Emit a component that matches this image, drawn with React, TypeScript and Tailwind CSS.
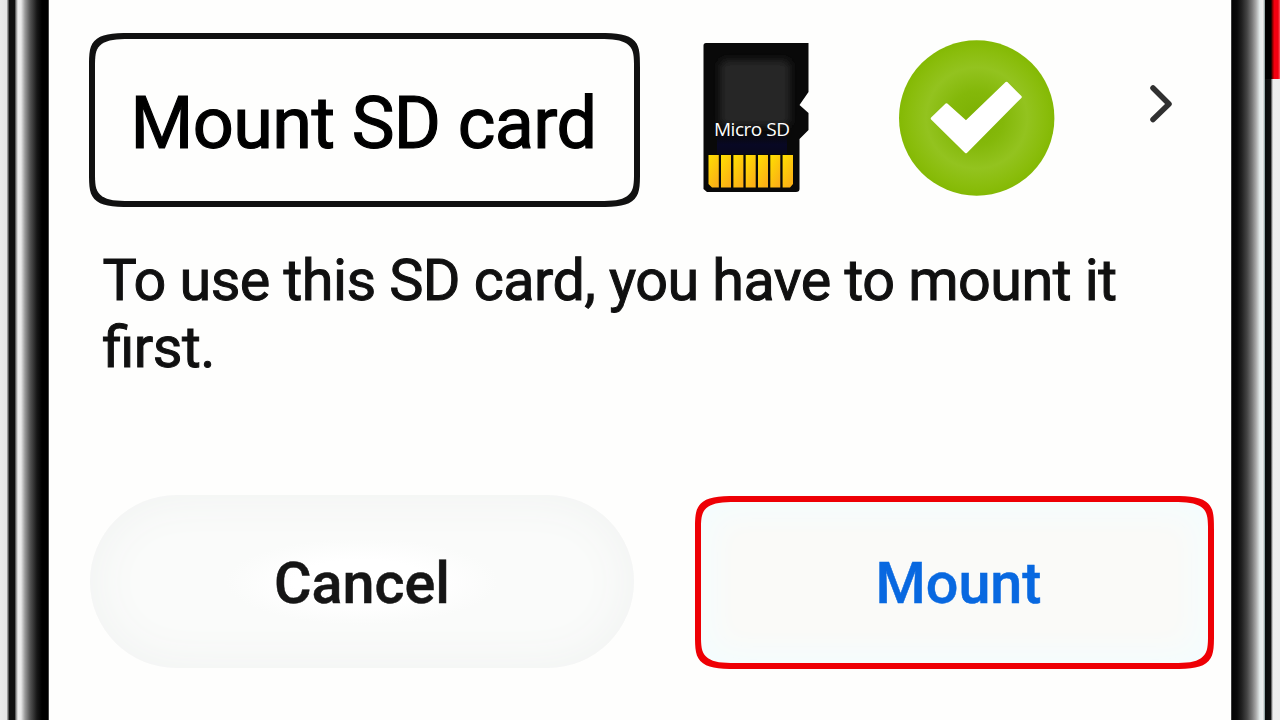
import React from "react";

const SdCard = () => {
  return (
    <svg width="106" height="149" viewBox="0 0 106 149">
      <defs>
        <linearGradient id="sdBlue" x1="0" y1="0" x2="0" y2="1">
          <stop offset="0" stopColor="#08081c" stopOpacity="0" />
          <stop offset="0.6" stopColor="#080824" />
          <stop offset="1" stopColor="#08081c" />
        </linearGradient>
        <linearGradient id="sdPin" x1="0" y1="0" x2="0.6" y2="1">
          <stop offset="0" stopColor="#ffe000" />
          <stop offset="1" stopColor="#fbb116" />
        </linearGradient>
        <filter id="sdSoft" x="-20%" y="-20%" width="140%" height="140%">
          <feGaussianBlur stdDeviation="4.5" />
        </filter>
      </defs>
      <path
        d="M3 0H105.5V49L96.5 62L105.5 70V87L96.5 96V146Q96.5 149 93 149H4L0.5 146V2.5Q0.5 0 3 0Z"
        fill="#090909"
      />
      <rect
        x="17"
        y="17"
        width="70"
        height="66"
        rx="6"
        fill="#272727"
        filter="url(#sdSoft)"
      />
      <rect x="14" y="88" width="70" height="23" fill="url(#sdBlue)" />
      <g fill="url(#sdPin)">
        <path d="M5.5 112H15.8V144.5H9L5.5 141Z" />
        <rect x="18" y="112" width="10" height="32.5" />
        <rect x="30.4" y="112" width="10" height="32.5" />
        <rect x="42.7" y="112" width="10" height="32.5" />
        <rect x="55" y="112" width="10" height="32.5" />
        <rect x="67.3" y="112" width="10" height="32.5" />
        <path d="M79.6 112H90V141L87 144.5H79.6Z" />
      </g>
      <text
        x="11"
        y="93"
        textLength="76"
        fontFamily="'Open Sans', sans-serif"
        fontSize="19"
        fill="#ffffff"
      >
        Micro SD
      </text>
    </svg>
  );
};

const CheckBadge = () => {
  return (
    <svg width="156" height="156" viewBox="0 0 156 156">
      <defs>
        <radialGradient id="badge" cx="0.5" cy="0.5" r="0.5">
          <stop offset="0" stopColor="#7cb003" />
          <stop offset="0.35" stopColor="#84b80a" />
          <stop offset="0.65" stopColor="#93c31f" />
          <stop offset="0.88" stopColor="#8abd0c" />
          <stop offset="1" stopColor="#84b904" />
        </radialGradient>
      </defs>
      <circle cx="77.7" cy="78" r="77.7" fill="url(#badge)" />
      <path
        d="M33 78.5L47.5 64.5L67 82L107.5 43L121.5 57L67 112Z"
        fill="#ffffff"
        stroke="#ffffff"
        strokeWidth="2.5"
        strokeLinejoin="round"
      />
    </svg>
  );
};

const App = () => {
  return (
    <div className="flex h-[720px] w-[1280px] overflow-hidden bg-[#fefefd] font-['Roboto',sans-serif]">
      <div className="w-[49px] shrink-0 bg-[linear-gradient(90deg,#ebebeb_0,#e6e6e6_6.5px,#777_8px,#111_9.5px,#111_14.5px,#888_16px,#eee_18px,#e8e8e8_21px,#999_25px,#555_30px,#161616_37px,#000_42px,#000_48px,#888_49px)]" />

      <main className="flex w-[1182px] shrink-0 flex-col pl-[41px]">
        <div className="-ml-px flex h-[207px] items-start pt-[32.5px]">
          <div className="flex h-[174.5px] w-[551px] shrink-0 items-center justify-center rounded-[50px/36px] border-6 border-[#111] pr-[2px] pt-[9px] [corner-shape:squircle]">
            <h1 className="whitespace-nowrap text-[72px] leading-[84px] tracking-[-0.6px] text-black [-webkit-text-stroke:1.2px_#000]">
              Mount SD card
            </h1>
          </div>
          <div className="ml-[63px] mt-[10.5px]">
            <SdCard />
          </div>
          <div className="ml-[90px] mt-[7.5px]">
            <CheckBadge />
          </div>
          <svg
            className="ml-[94px] mt-[51px]"
            width="26"
            height="40"
            viewBox="0 0 26 40"
            fill="none"
            stroke="#303030"
            strokeWidth="5.5"
            strokeLinecap="round"
            strokeLinejoin="round"
          >
            <path d="M4 4L20 20L4 35.5" />
          </svg>
        </div>

        <p className="mt-[40px] h-[247px] w-[1080px] pl-[12.5px] text-[57.5px] leading-[67px] tracking-[-0.53px] text-[#101010] [-webkit-text-stroke:1px_#101010] [font-feature-settings:'liga'_1]">
          To use this SD card, you have to mount it first.
        </p>

        <div className="flex">
          <button className="mt-[0.5px] flex h-[173px] w-[544px] shrink-0 items-center justify-center rounded-full bg-[radial-gradient(closest-side,#ffffff_25%,#fafbfa_50%,#fafbfa_100%)] pt-[7px] text-[57.5px] font-medium text-[#151515] shadow-[inset_0_0_50px_#f0f2f1] [-webkit-text-stroke:0.5px_#151515]">
            Cancel
          </button>
          <button className="ml-[61px] mt-[2px] flex h-[173px] w-[519px] shrink-0 items-center justify-center rounded-[50px/36px] border-6 border-[#ee0005] bg-[#fafaf8] pl-[8px] pt-[4px] text-[57.5px] font-medium text-[#0868e0] shadow-[inset_0_0_30px_10px_#f4fdfe] [-webkit-text-stroke:0.5px_#0868e0] [corner-shape:squircle]">
            Mount
          </button>
        </div>
      </main>

      <div className="w-[34px] shrink-0 bg-[linear-gradient(90deg,#555_0,#050505_1.5px,#0a0a0a_6px,#222_11px,#444_16px,#777_21px,#aaa_25px,#e4ecec_29px,#eee_32px,#9aa_33.5px,#122_34px)]" />
      <div className="flex w-[15px] shrink-0 flex-col bg-[linear-gradient(90deg,#0a0c0c_0,#111_5.5px,#999_7px,#eee_8px,#ededed_15px)]">
        <div className="h-[79px] bg-[linear-gradient(90deg,#000_0,#000_6px,#a00_8px,#f20010_9.5px,#f20010_13px,#ff5a60_15px)]" />
      </div>
    </div>
  );
};

export default App;
